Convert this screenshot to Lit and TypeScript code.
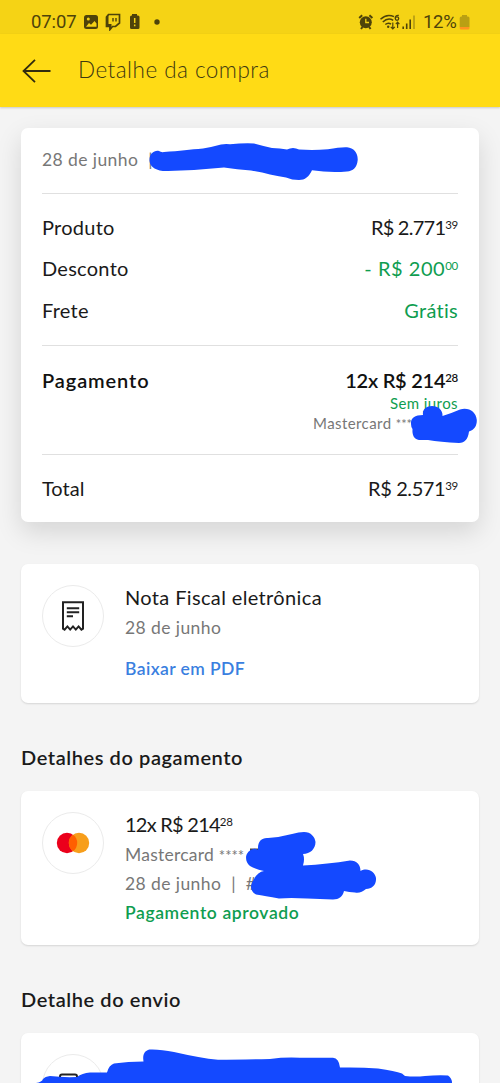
import { LitElement, html, css, svg } from "lit";
import { customElement } from "lit/decorators.js";

const receiptIcon = svg`<svg width="24" height="32" viewBox="0 0 24 32" fill="none" stroke="#222" stroke-width="2">
  <path d="M2 2.2H22V28.6L20.4 29.6L17.6 26.4L14.8 29.6L12 26.4L9.2 29.6L6.4 26.4L3.6 29.6L2 28.6Z"/>
  <path d="M5.8 8.2H18.2M5.8 12.2H18.2M5.8 16.2H12" stroke-width="1.9"/>
</svg>`;

const cardLogo = svg`<svg width="34" height="22" viewBox="0 0 34 22">
  <circle cx="11" cy="11" r="10.2" fill="#eb001b"/>
  <circle cx="23" cy="11" r="10.2" fill="#f79e1b"/>
  <path d="M17 2.75A10.2 10.2 0 0 1 17 19.25A10.2 10.2 0 0 1 17 2.75Z" fill="#ff5f00"/>
</svg>`;

@customElement("app-root")
export class AppRoot extends LitElement {
  static styles = css`
    :host {
      display: block;
      position: relative;
      height: 1083px;
      overflow: hidden;
      background: #f4f4f4;
      color: #1a1a1a;
      font-family: Lato, "Open Sans", sans-serif;
      font-size: 20px;
      line-height: 28px;
    }
    * { box-sizing: border-box; }
    svg { display: block; flex: none; }
    .status {
      height: 34px;
      padding: 9px 30px 0 31px;
      display: flex;
      align-items: center;
      background: #f5d315;
      color: #4e430a;
      font: 400 18.5px/26px Roboto, sans-serif;
    }
    .clock { width: 53px; letter-spacing: -0.1px; }
    .notif { flex: 1; display: flex; align-items: center; }
    .pct { width: 36px; margin-left: 5px; letter-spacing: -0.3px; }
    .bar {
      height: 73px;
      padding: 0 22px;
      display: flex;
      align-items: center;
      gap: 27px;
      background: #ffdb15;
      color: #403811;
      font-weight: 300;
      font-size: 22.5px;
      letter-spacing: 0.47px;
      box-shadow: 0 1px 2px rgba(0, 0, 0, 0.18);
    }
    .bar span { margin-top: -2px; }
    .content { padding: 21px 21px 0; }
    .card {
      background: #fff;
      border-radius: 7px;
      box-shadow: 0 1px 2px rgba(0, 0, 0, 0.13);
    }
    .summary {
      height: 394px;
      padding: 0 21px;
      box-shadow: 0 10px 26px rgba(0, 0, 0, 0.13);
    }
    .line { display: flex; justify-content: space-between; align-items: center; height: 41.6px; letter-spacing: 0.27px; }
    .date { height: 65px; display: flex; align-items: center; }
    .date span { margin-top: -1px; }
    .muted { color: #777; font-size: 17.5px; letter-spacing: 0.42px; }
    .bar-sep { margin-left: 10px; }
    .costs { height: 152px; padding-top: 12px; border-top: 1px solid #e0e0e0; }
    .pay { height: 109px; padding-top: 20px; border-top: 1px solid #e0e0e0; }
    .pay .line { height: 28px; letter-spacing: 0.9px; margin-bottom: -1px; }
    .total { height: 67px; padding-top: 12px; border-top: 1px solid #e0e0e0; }
    .total .line { letter-spacing: 0; }
    .green { color: #0f9d50; }
    .strong { font-weight: 600; color: #111; }
    .cents { font-size: 11.5px; line-height: 0; vertical-align: 6px; letter-spacing: -0.3px; }
    .tight { letter-spacing: -0.75px; }
    .snug { letter-spacing: -0.4px; }
    .pay .even { letter-spacing: -0.25px; }
    .wide { letter-spacing: 0.55px; }
    .small { font-size: 15px; line-height: 20px; text-align: right; letter-spacing: 0.42px; }
    .masked { color: #777; padding-right: 46px; }
    .stars { font-size: 0.85em; letter-spacing: 0; }
    .invoice { height: 139px; margin-top: 42px; }
    .media { display: flex; padding: 21px; gap: 21px; }
    .disc {
      width: 62px;
      height: 62px;
      flex: none;
      display: flex;
      align-items: center;
      justify-content: center;
      border: 1px solid #ebebeb;
      border-radius: 50%;
    }
    .title { letter-spacing: 0.36px; }
    .link { color: #3a7fe0; font-size: 17.5px; font-weight: 600; margin-top: 13px; letter-spacing: 0.42px; }
    .heading { margin: 40px 0 20px; font-weight: 600; height: 28px; letter-spacing: 0.58px; }
    .payment { height: 154px; }
    .payment + .heading { margin-top: 40px; }
    .approved { font-size: 17.5px; font-weight: 600; letter-spacing: 0.6px; }
    .rows > * { white-space: pre; }
    .invoice .rows { margin-top: -2px; }
    .invoice .muted { margin-top: 3px; }
    .payment .rows .muted, .approved { height: 28.8px; line-height: 29px; }
    .payment .rows { margin-top: -2px; }
    .payment .price { margin-bottom: 2px; }
    .payment .rows .brand { letter-spacing: 0.25px; }
    .shipping { height: 120px; }
    .marker { position: absolute; inset: 0; pointer-events: none; }
  `;

  render() {
    return html`
      <div class="status">
        <span class="clock">07:07</span>
        <div class="notif">
          <svg width="78" height="18" viewBox="0 0 78 18" fill="#4e430a">
            <rect x="0" y="2" width="14" height="14" rx="2.5"/>
            <circle cx="4.3" cy="6" r="1.5" fill="#f5d315"/>
            <path d="M2 13.7L5 10L7 11.7L10.5 8L12.5 10.5V13.7Z" fill="#f5d315"/>
            <path d="M24.5 1.5H35.5V10L31.5 13.5H28.5L26 16.5V13.5H22.5V4Z" fill="none" stroke="#4e430a" stroke-width="1.7"/>
            <path d="M22 4L24.5 1.5V11H27.5V13.5L25.5 16.5V13.5H22Z"/>
            <path d="M29 5V8.5M32 5V8.5" stroke="#4e430a" stroke-width="1.4"/>
            <path d="M48 1H53V2.5H54A1.5 1.5 0 0 1 55.5 4V14.5A1.5 1.5 0 0 1 54 16H47.5A1.5 1.5 0 0 1 46 14.5V4A1.5 1.5 0 0 1 47.5 2.5H48Z"/>
            <path d="M50.7 5V10M50.7 11.6V13.2" stroke="#f5d315" stroke-width="1.5"/>
            <circle cx="73" cy="9" r="2.7"/>
          </svg>
        </div>
        <svg width="60" height="18" viewBox="0 0 60 18" fill="none" stroke="#4e430a" stroke-width="1.6">
          <circle cx="7.8" cy="9.2" r="6" fill="#4e430a" stroke="none"/>
          <path d="M1.2 5L4.2 2.3M14.4 5L11.4 2.3M3 16L4.5 14M12.6 16L11.1 14" stroke-width="2"/>
          <path d="M7.8 5.8V9.5H11" stroke="#f5d315" stroke-width="1.3"/>
          <path d="M22.5 6.2Q29 0.2 36 3.7M24.8 9Q30 4 35.2 7.3M27.3 11.5Q30.3 9 33 11.2" stroke-width="1.5"/>
          <circle cx="30.2" cy="13.8" r="1.2" fill="#4e430a" stroke="none"/>
          <path d="M34.8 9.5V15.5M32.8 13.8L34.8 15.8L36.8 13.8M39.6 15V9.5M37.8 11.2L39.6 9.2L41.4 11.2" stroke-width="1.2"/>
          <path d="M40.8 2.4Q37.2 2 37.2 5.2" stroke-width="1.3"/>
          <circle cx="39" cy="5.6" r="1.7" stroke-width="1.3"/>
          <path d="M45.2 16V13.5M48.7 16V10.5M52.2 16V6.5" stroke-width="1.6"/>
          <path d="M56 16V2.5" stroke="#b29a14" stroke-width="1.6"/>
        </svg>
        <span class="pct">12%</span>
        <svg width="11" height="18" viewBox="0 0 11 18">
          <path d="M3 2H8V3.5H9A1.5 1.5 0 0 1 10.5 5V14H.7V5A1.5 1.5 0 0 1 2.2 3.5H3Z" fill="#b9a013"/>
          <path d="M.7 14H10.5V15A1.5 1.5 0 0 1 9 16.5H2.2A1.5 1.5 0 0 1 .7 15Z" fill="#ff9420"/>
        </svg>
      </div>
      <div class="bar">
        <svg width="29" height="24" viewBox="0 0 29 24" fill="none" stroke="#312b0e" stroke-width="1.8">
          <path d="M28.5 12H1.5M13 .8L1.5 12L13 23.2"/>
        </svg>
        <span>Detalhe da compra</span>
      </div>
      <div class="content">
        <section class="card summary">
          <div class="date muted"><span>28 de junho</span><span class="bar-sep">|</span></div>
          <div class="costs">
            <div class="line"><span>Produto</span><span class="tight">R$ 2.771<span class="cents">39</span></span></div>
            <div class="line"><span>Desconto</span><span class="green wide">- R$ 200<span class="cents">00</span></span></div>
            <div class="line"><span>Frete</span><span class="green">Grátis</span></div>
          </div>
          <div class="pay">
            <div class="line strong"><span>Pagamento</span><span class="even">12x R$ 214<span class="cents">28</span></span></div>
            <div class="small green">Sem juros</div>
            <div class="small masked">Mastercard <span class="stars">***</span></div>
          </div>
          <div class="total">
            <div class="line"><span>Total</span><span class="snug">R$ 2.571<span class="cents">39</span></span></div>
          </div>
        </section>
        <section class="card invoice">
          <div class="media">
            <div class="disc">${receiptIcon}</div>
            <div class="rows">
              <div class="title">Nota Fiscal eletrônica</div>
              <div class="muted">28 de junho</div>
              <div class="link">Baixar em PDF</div>
            </div>
          </div>
        </section>
        <div class="heading">Detalhes do pagamento</div>
        <section class="card payment">
          <div class="media">
            <div class="disc">${cardLogo}</div>
            <div class="rows">
              <div class="price tight">12x R$ 214<span class="cents">28</span></div>
              <div class="muted brand">Mastercard <span class="stars">****</span></div>
              <div class="muted">28 de junho  |  #</div>
              <div class="approved green">Pagamento aprovado</div>
            </div>
          </div>
        </section>
        <div class="heading">Detalhe do envio</div>
        <section class="card shipping">
          <div class="media">
            <div class="disc">
              <svg width="28" height="24" viewBox="0 0 28 24" fill="none" stroke="#222" stroke-width="2"><rect x="1" y="1.5" width="17" height="21.500" rx="2"/></svg>
            </div>
          </div>
        </section>
      </div>
      <svg class="marker" width="500" height="1083" viewBox="0 0 500 1083" fill="#1449ff">
        <path d="M149.500 161C149 154 154 150 159 151Q161 152.500 164 152C180 151 190 149.500 203 148.500Q212 147 221 144.500Q226 143.500 230 144.300Q243 143 254 143.500Q263 146 272 148Q280 148 287 149.500Q293 146.500 299 149.500Q313 150.500 328 149.300Q340 147 347 147.300C354 148 358 153 357.700 160C357 168 353 171 347 171.500Q330 173 312 170.300C309 177 305 180 299 180Q292 180 286 177.500Q277 176 270 174.500Q261 172 251 170.500Q237 169.500 224 167.500Q195 170.500 168 171C158 171.500 150 168 149.500 161Z"/>
        <path d="M411 424C410.500 418 415 415 423 415C422 409 427 406 432 406C438 406 443 410 442.500 416Q452 413 460 409.500C469 407 476 412 476.800 420C477 426 474 430 469 431.500C468 439 465 443 459 443Q440 442 428 440Q422 440 419 440C414 439 412 435 412.500 429Q411 427 411 424Z"/>
        <path d="M250 848.500H258V852H250Z" fill="#444"/>
        <path d="M258 848C258 841 262 837.500 268 838Q281 837 292 834Q299 832 304 832C311 832 315 837 315.500 842C315.500 849 310 854 303 854Q305 859 303 865.500Q328 864 350 860.500C357 860.500 360.500 865 360.500 871C368 867 375 872 376 878C376.500 885 372 889 366 889Q361 893.500 355 892.500Q349 892 344 891C343 896 339 899.500 333 899.500Q320 899 307 898.500Q290 897.500 279 898.500Q265 896 256 894.500C250 891 250 885 253 881Q257 872 264 871Q256 869.500 250 866C244 861 245 852 252 849.500Q255 848 258 850Z"/>
        <path d="M36 1083Q42 1082 43 1079Q45 1076.500 50 1076Q62 1077.500 77 1077Q82 1073 90 1072.500H107Q109 1065 114 1063.500Q128 1061.500 143.500 1061.500C142 1053 146 1049.500 151 1049.500Q161 1049.300 174 1052Q200 1058 218 1059.800Q240 1059.500 270 1059Q285 1057 300 1057.800H333Q339 1058.500 340 1067.500Q360 1067 378 1068.500Q395 1071 402 1073.500Q404 1075 405 1076Q415 1077 425 1076Q437 1075 448 1075.500Q452 1078 452 1083Z"/>
      </svg>
    `;
  }
}
